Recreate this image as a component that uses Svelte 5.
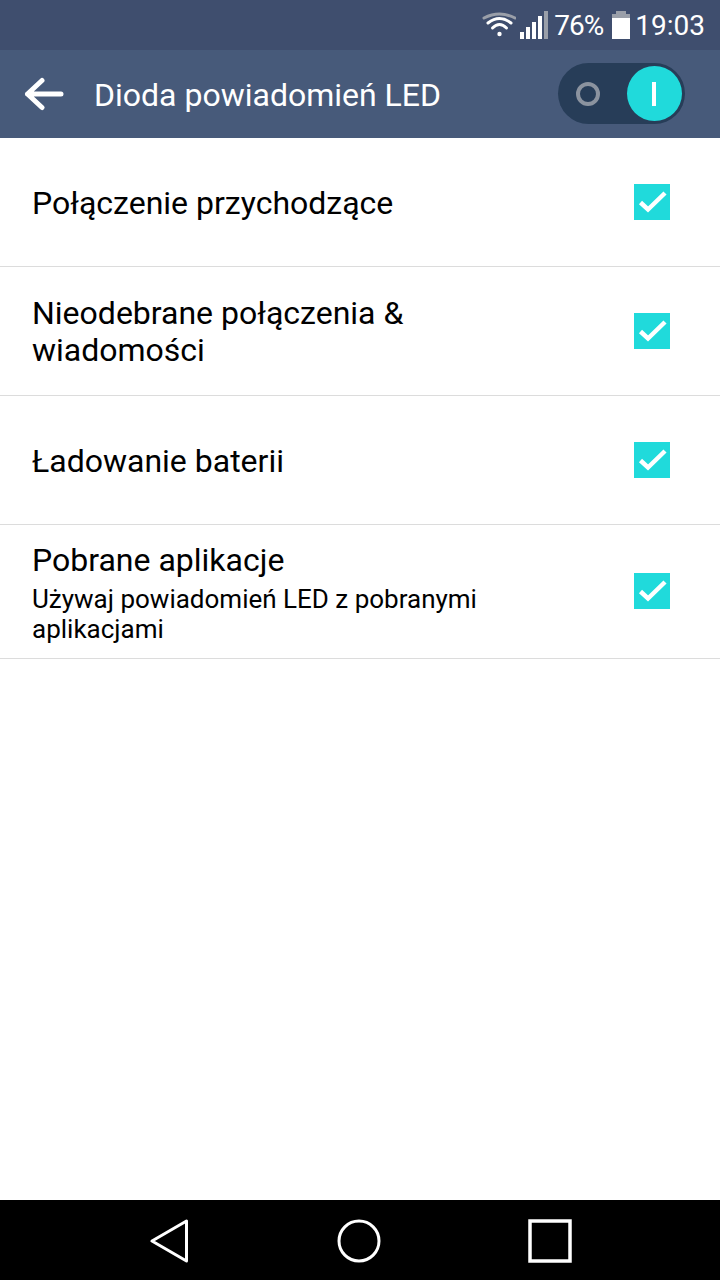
<script>
	const rows = [
		{ title: 'Połączenie przychodzące' },
		{ title: 'Nieodebrane połączenia & wiadomości' },
		{ title: 'Ładowanie baterii' },
		{ title: 'Pobrane aplikacje', sub: 'Używaj powiadomień LED z pobranymi aplikacjami' }
	];
</script>

<div class="screen">
	<div class="status">
		<svg class="wifi" width="36" height="28" viewBox="0 0 36 28" fill="none" stroke-linecap="round">
			<path d="M4 7Q19.500 -1 35 7" stroke="#9a9fa9" stroke-width="3" />
			<path d="M8 12Q19.500 3 31 12" stroke="#fff" stroke-width="3" />
			<path d="M12.500 17Q19.500 10 26.500 17" stroke="#fff" stroke-width="3" />
			<circle cx="19.500" cy="23" r="2.200" fill="#fff" />
		</svg>
		<svg class="signal" width="28" height="28" viewBox="0 0 28 28">
			<rect x="0" y="21" width="4" height="7" fill="#fff" />
			<rect x="6" y="16" width="4" height="12" fill="#fff" />
			<rect x="12" y="11" width="4" height="17" fill="#fff" />
			<rect x="18" y="5" width="4" height="23" fill="#fff" />
			<rect x="24" y="0" width="4" height="28" fill="#9a9fa9" />
		</svg>
		<span class="pct">76%</span>
		<svg class="batt" width="18" height="28" viewBox="0 0 18 28">
			<rect x="4" y="0" width="10" height="3" fill="#9a9fa9" />
			<rect x="0" y="3" width="18" height="4" fill="#9a9fa9" />
			<rect x="0" y="7" width="18" height="21" fill="#fff" />
		</svg>
		<span class="time">19:03</span>
	</div>

	<header class="bar">
		<svg class="back" width="40" height="34" viewBox="0 0 40 34" fill="none" stroke="#fff" stroke-width="5" stroke-linecap="round" stroke-linejoin="round">
			<path d="M18 3.500L3.500 17L18 30.500M3.500 17H37" />
		</svg>
		<h1>Dioda powiadomień LED</h1>
		<div class="toggle">
			<span class="off"></span>
			<span class="knob"><i></i></span>
		</div>
	</header>

	<main class="list">
		{#each rows as row}
			<div class="row" class:has-sub={row.sub}>
				<div class="text">
					<div class="title">{row.title}</div>
					{#if row.sub}
						<div class="sub">{row.sub}</div>
					{/if}
				</div>
				<svg class="check" width="36" height="36" viewBox="0 0 36 36">
					<rect width="36" height="36" fill="#20dadb" />
					<path d="M6.500 18.500L14 25.500L31 9" fill="none" stroke="#fff" stroke-width="4.500" />
				</svg>
			</div>
		{/each}
	</main>

	<nav class="nav">
		<svg width="40" height="44" viewBox="0 0 40 44" fill="none" stroke="#fff" stroke-width="3" stroke-linejoin="round">
			<path d="M2 22L36.500 2V42Z" />
		</svg>
		<svg width="44" height="44" viewBox="0 0 44 44" fill="none" stroke="#fff" stroke-width="3">
			<circle cx="22" cy="22" r="20" />
		</svg>
		<svg width="44" height="44" viewBox="0 0 44 44" fill="none" stroke="#fff" stroke-width="3.500">
			<rect x="2" y="2" width="40" height="40" />
		</svg>
	</nav>
</div>

<style>
	:global(body) {
		margin: 0;
	}

	.screen {
		width: 720px;
		height: 1280px;
		display: flex;
		flex-direction: column;
		background: #fff;
		font-family: Roboto, sans-serif;
		color: #000;
	}

	.status {
		height: 50px;
		background: #3f4e6e;
		color: #fff;
		display: flex;
		align-items: center;
		justify-content: flex-end;
		padding-right: 15px;
		font-size: 28px;
		box-sizing: border-box;
	}

	.wifi {
		margin-right: 4px;
	}

	.signal {
		margin-right: 6px;
	}

	.pct {
		margin-right: 9px;
		letter-spacing: -1px;
	}

	.batt {
		margin-right: 5px;
	}

	.bar {
		height: 88px;
		box-sizing: border-box;
		padding: 0 35px 1px 24px;
		background: #475a7a;
		display: flex;
		align-items: center;
	}

	.back {
		flex: none;
		margin-top: 1px;
	}

	h1 {
		margin: 3px 0 0 30px;
		flex: 1;
		font-size: 32px;
		font-weight: 400;
		color: #fff;
	}

	.toggle {
		width: 127px;
		height: 61px;
		border-radius: 31px;
		background: #273d58;
		display: flex;
		align-items: center;
		justify-content: space-between;
		padding: 0 3px 0 18px;
		box-sizing: border-box;
	}

	.off {
		width: 24px;
		height: 24px;
		border: 4px solid #8b939f;
		border-radius: 50%;
		box-sizing: border-box;
	}

	.knob {
		width: 55px;
		height: 55px;
		border-radius: 50%;
		background: #20dadb;
		display: flex;
		align-items: center;
		justify-content: center;
	}

	.knob i {
		width: 4px;
		height: 24px;
		margin-right: 1px;
		background: #fff;
	}

	.list {
		flex: 1;
	}

	.row {
		height: 129px;
		box-sizing: border-box;
		border-bottom: 1px solid #dcdcdc;
		display: flex;
		align-items: center;
		justify-content: space-between;
		padding: 0 50px 0 32px;
	}

	.row.has-sub {
		height: 134px;
	}

	.has-sub .check {
		margin-top: -1px;
	}

	.text {
		width: 470px;
		margin-top: 2px;
	}

	.title {
		font-size: 32px;
		line-height: 37px;
	}

	.sub {
		font-size: 26px;
		line-height: 30px;
		margin-top: 5px;
	}

	.nav {
		height: 80px;
		box-sizing: border-box;
		padding: 2px 148px 0 150px;
		background: #000;
		display: flex;
		align-items: center;
		justify-content: space-between;
	}
</style>
